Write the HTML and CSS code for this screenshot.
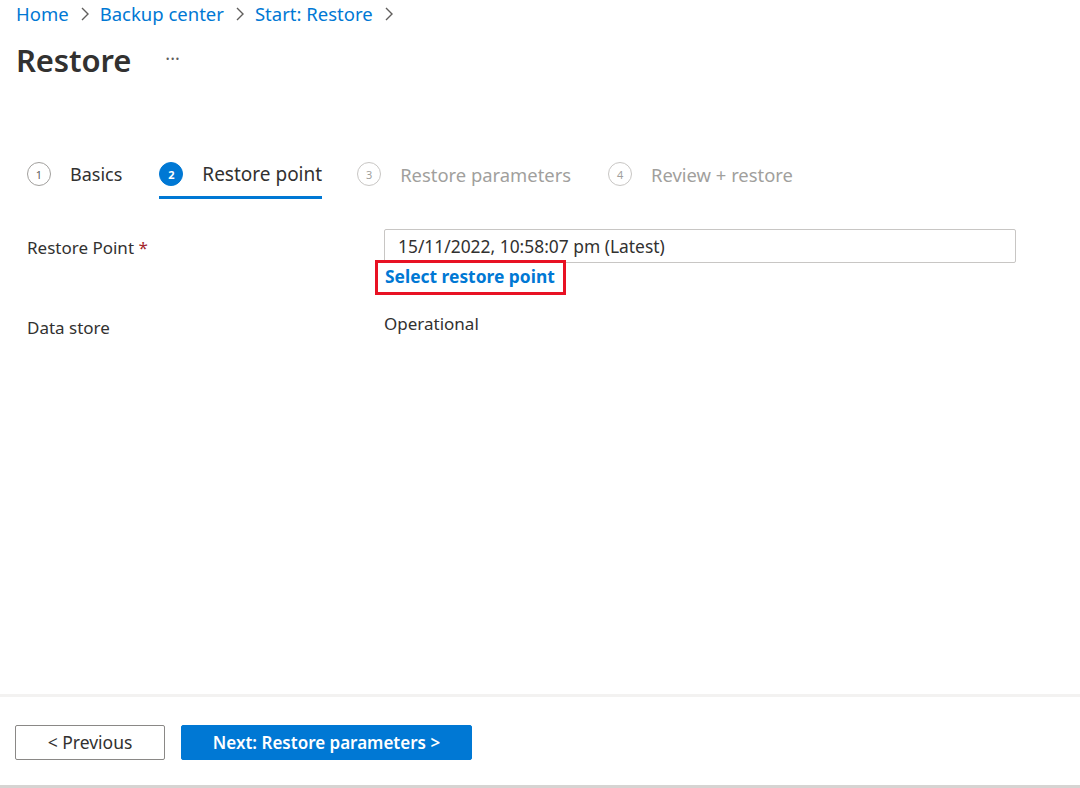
FILE: index.html
```html
<!DOCTYPE html>
<html>
<head>
<meta charset="utf-8">
<link rel="stylesheet" href="styles.css">
</head>
<body>
<div class="page">
  <div class="main">
    <nav class="crumbs">
      <a>Home</a><svg class="sep" viewBox="0 0 10 16" width="10" height="16"><path d="M2 2 L8 8 L2 14" fill="none" stroke="#605e5c" stroke-width="1.4"/></svg><a>Backup center</a><svg class="sep" viewBox="0 0 10 16" width="10" height="16"><path d="M2 2 L8 8 L2 14" fill="none" stroke="#605e5c" stroke-width="1.4"/></svg><a>Start: Restore</a><svg class="sep" viewBox="0 0 10 16" width="10" height="16"><path d="M2 2 L8 8 L2 14" fill="none" stroke="#605e5c" stroke-width="1.4"/></svg>
    </nav>
    <div class="titlerow">
      <h1>Restore</h1>
      <span class="more">···</span>
    </div>
    <div class="tabs">
      <div class="tab"><span class="num">1</span><span class="lbl">Basics</span></div>
      <div class="tab active"><span class="num">2</span><span class="lbl">Restore point</span></div>
      <div class="tab disabled"><span class="num">3</span><span class="lbl">Restore parameters</span></div>
      <div class="tab disabled"><span class="num">4</span><span class="lbl">Review + restore</span></div>
    </div>
    <div class="form">
      <div class="row">
        <div class="label">Restore Point <span class="req">*</span></div>
        <div class="field">
          <div class="input">15/11/2022, 10:58:07 pm (Latest)</div>
          <div class="linkbox"><a class="link">Select restore point</a></div>
        </div>
      </div>
      <div class="row row2">
        <div class="label">Data store</div>
        <div class="value">Operational</div>
      </div>
    </div>
  </div>
  <footer class="footer">
    <button class="btn">&lt; Previous</button>
    <button class="btn primary">Next: Restore parameters &gt;</button>
  </footer>
</div>
</body>
</html>
```
FILE: styles.css
```css
html, body { margin: 0; padding: 0; background: #fff; }
body { font-family: "Noto Sans", "Open Sans", sans-serif; color: #323130; }
.page { width: 1080px; height: 788px; display: flex; flex-direction: column; box-sizing: border-box; border-bottom: 3px solid #d6d4d2; }
.main { flex: 1; }
.crumbs { padding: 0 0 0 16px; height: 27px; display: flex; align-items: center; font-size: 18.5px; color: #0078d4; }
.crumbs a { color: #0078d4; }
.crumbs .sep { margin: 0 10px 0 11px; }
.titlerow { display: flex; align-items: center; padding-left: 16px; height: 66px; }
h1 { margin: 0; font-size: 31px; font-weight: 600; color: #323130; letter-spacing: -0.1px; }
.more { margin-left: 34px; font-size: 18px; color: #605e5c; margin-top: -4px; }
.tabs { display: flex; margin-top: 61px; padding-left: 27px; gap: 37px; }
.tab { display: flex; align-items: center; height: 40px; padding-bottom: 2px; border-bottom: 3px solid transparent; }
.tab .num { width: 22px; height: 22px; border: 1.5px solid #a19f9d; border-radius: 50%; display: flex; align-items: center; justify-content: center; font-size: 11px; color: #605e5c; margin-right: 19px; }
.tab .lbl { font-size: 19px; color: #323130; }
.tab:first-child .lbl { font-size: 18px; }
.tab.active { border-bottom-color: #0078d4; }
.tab.active .num { background: #0078d4; border-color: #0078d4; color: #fff; font-weight: 700; }
.tab.disabled .num { border-color: #c8c6c4; color: #a19f9d; }
.tab.disabled .lbl { color: #a19f9d; font-size: 18.4px; }
.tab:nth-child(3) { margin-left: -2px; }
.form { margin-top: 30px; padding-left: 27px; }
.row { display: flex; }
.label { width: 357px; font-size: 17px; color: #323130; padding-top: 7px; }
.req { color: #a4262c; }
.field { width: 632px; }
.input { height: 34px; border: 1.5px solid #c8c6c4; border-radius: 2px; box-sizing: border-box; padding-left: 13px; display: flex; align-items: center; font-size: 17.4px; color: #323130; }
.linkbox { display: inline-block; border: 3px solid #e81123; margin-left: -9px; margin-top: -3px; padding: 1px 8px 4px 7px; }
.link { color: #0078d4; font-weight: 700; font-size: 17.4px; }
.row2 { margin-top: 17px; }
.row2 .label { padding-top: 4px; }
.value { font-size: 17px; color: #323130; }
.footer { height: 88px; border-top: 3px solid #f3f2f1; display: flex; align-items: center; padding-left: 15px; gap: 16px; }
.btn { height: 35px; font-family: inherit; font-size: 17.5px; background: #fff; border: 1.5px solid #8a8886; border-radius: 2px; color: #323130; width: 150px; margin-top: 2px; }
.btn.primary { background: #0078d4; border-color: #0078d4; color: #fff; width: 291px; font-weight: 600; font-size: 17px; }
```
